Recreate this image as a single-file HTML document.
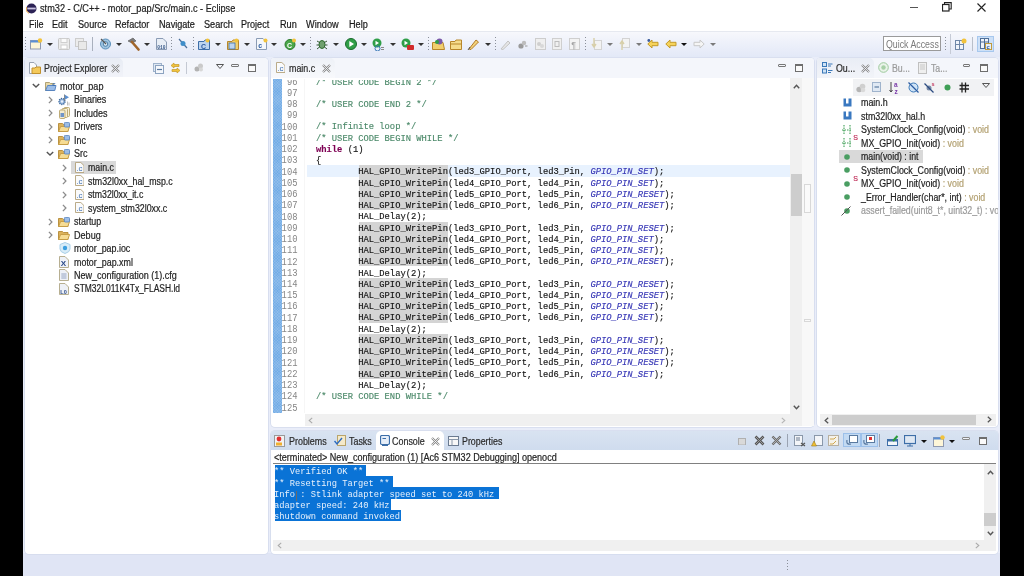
<!DOCTYPE html><html><head><meta charset="utf-8"><style>
*{margin:0;padding:0;box-sizing:border-box}
html,body{width:1024px;height:576px;overflow:hidden;background:#000}
body{position:relative;font-family:"Liberation Sans",sans-serif;font-size:9.5px;color:#1e1e1e}
.a{position:absolute}
.t{position:absolute;white-space:pre;line-height:11px;-webkit-text-stroke:0.2px currentColor}
.m{-webkit-text-stroke:0}
.m{font-family:"Liberation Mono",monospace}
#win{position:absolute;left:23px;top:0;width:977px;height:576px;background:#e1e6f6;overflow:hidden;filter:blur(0.35px)}
.dd{position:absolute;width:0;height:0;border-left:3px solid transparent;border-right:3px solid transparent;border-top:3px solid #222}
.grip{position:absolute;width:1px;height:13px;background:repeating-linear-gradient(#8a8f99 0 1px,transparent 1px 3px)}
.sep{position:absolute;width:1px;height:14px;background:#a9b0bd}
.ic{position:absolute}
.panel{position:absolute;background:#fff;overflow:hidden;border-radius:3px 3px 0 0}
.minb{position:absolute;width:8px;height:3px;border:1px solid #555;border-radius:1px}
.maxb{position:absolute;width:9px;height:9px;border:1px solid #555;border-top-width:2px}
.xcl{position:absolute;font-size:10px;color:#777;line-height:10px}
</style></head><body><div id="win">
<div class="a" style="left:0.00px;top:0.00px;width:977.00px;height:31.00px;background:#fff"></div>
<div class="a" style="left:0.00px;top:31.00px;width:977.00px;height:1.00px;background:#e6e9f0"></div>
<div class="a" style="left:0.00px;top:32.00px;width:977.00px;height:26.00px;background:linear-gradient(#f7f8fc,#eef1fa 40%,#e2e8f7)"></div>
<div class="a" style="left:0.00px;top:57.00px;width:977.00px;height:496.00px;background:#e9edf9"></div>
<div class="a" style="left:0.00px;top:553.00px;width:977.00px;height:23.00px;background:#e0e5f5"></div>
<svg class="ic" style="left:3.00px;top:3.00px;" width="11" height="11" viewBox="0 0 11 11"><circle cx="5.5" cy="5.5" r="5" fill="#2c2255"/><path d="M0.6 4.2 A5 5 0 0 0 3 10.3" stroke="#e9a640" stroke-width="1" fill="none"/><rect x="1.3" y="4.6" width="8.4" height="1.8" fill="#c9c3e0"/></svg>
<div class="t" style="left:17.00px;top:3.00px;font-size:10px;color:#222;transform:scaleX(0.9176);transform-origin:0 0;">stm32 - C/C++ - motor_pap/Src/main.c - Eclipse</div>
<div class="a" style="left:886.50px;top:7.00px;width:8.00px;height:1.00px;background:#555"></div>
<svg class="ic" style="left:919.00px;top:2.00px;" width="10" height="10" viewBox="0 0 10 10"><rect x="0.5" y="2.5" width="6.5" height="6.5" fill="none" stroke="#222" stroke-width="1.2"/><path d="M2.5 2.5 V0.6 H9.2 V7 H7" fill="none" stroke="#222" stroke-width="1.1"/></svg>
<svg class="ic" style="left:954.00px;top:2.50px;" width="9" height="9" viewBox="0 0 9 9"><path d="M0.5 0.5 L8.5 8.5 M8.5 0.5 L0.5 8.5" stroke="#222" stroke-width="1.1"/></svg>
<div class="t" style="left:5.50px;top:19.00px;font-size:10px;color:#1a1a1a;transform:scaleX(0.9004);transform-origin:0 0;">File</div>
<div class="t" style="left:29.00px;top:19.00px;font-size:10px;color:#1a1a1a;transform:scaleX(0.9036);transform-origin:0 0;">Edit</div>
<div class="t" style="left:54.50px;top:19.00px;font-size:10px;color:#1a1a1a;transform:scaleX(0.9121);transform-origin:0 0;">Source</div>
<div class="t" style="left:92.00px;top:19.00px;font-size:10px;color:#1a1a1a;transform:scaleX(0.9077);transform-origin:0 0;">Refactor</div>
<div class="t" style="left:135.50px;top:19.00px;font-size:10px;color:#1a1a1a;transform:scaleX(0.9095);transform-origin:0 0;">Navigate</div>
<div class="t" style="left:181.00px;top:19.00px;font-size:10px;color:#1a1a1a;transform:scaleX(0.9121);transform-origin:0 0;">Search</div>
<div class="t" style="left:218.00px;top:19.00px;font-size:10px;color:#1a1a1a;transform:scaleX(0.9050);transform-origin:0 0;">Project</div>
<div class="t" style="left:256.50px;top:19.00px;font-size:10px;color:#1a1a1a;transform:scaleX(0.9173);transform-origin:0 0;">Run</div>
<div class="t" style="left:282.50px;top:19.00px;font-size:10px;color:#1a1a1a;transform:scaleX(0.9163);transform-origin:0 0;">Window</div>
<div class="t" style="left:326.00px;top:19.00px;font-size:10px;color:#1a1a1a;transform:scaleX(0.9111);transform-origin:0 0;">Help</div>
<div class="grip" style="left:2.00px;top:37px"></div>
<svg class="ic" style="left:7.00px;top:38.00px;" width="13" height="12" viewBox="0 0 13 12"><rect x="0.5" y="2.5" width="10" height="8.5" fill="#fdf6d8" stroke="#8f9ab0"/><rect x="0.5" y="2.5" width="10" height="2" fill="#5b8fd6"/><circle cx="10" cy="2.5" r="2.2" fill="#f2c33c"/></svg>
<div class="dd" style="left:23.50px;top:43px;border-top-color:#333"></div>
<svg class="ic" style="left:34.50px;top:38.00px;" width="12" height="12" viewBox="0 0 12 12"><rect x="0.5" y="0.5" width="11" height="11" rx="1" fill="#ececec" stroke="#c4c4c4"/><rect x="3" y="0.5" width="6" height="4" fill="#fafafa" stroke="#cfcfcf"/><rect x="3" y="7" width="6" height="4" fill="#fff" stroke="#d0d0d0"/></svg>
<svg class="ic" style="left:52.00px;top:38.00px;" width="12" height="12" viewBox="0 0 12 12"><rect x="0.5" y="0.5" width="8" height="8" fill="#ececec" stroke="#cdcdcd"/><rect x="3.5" y="3.5" width="8" height="8" fill="#e9e9e9" stroke="#c4c4c4"/></svg>
<div class="sep" style="left:68.50px;top:37px"></div>
<svg class="ic" style="left:76.50px;top:38.00px;" width="11" height="12" viewBox="0 0 11 12"><circle cx="5.5" cy="6" r="5" fill="#9fc4e0" stroke="#5a8fba"/><circle cx="5.5" cy="6" r="2.3" fill="#dbe9f4" stroke="#4a7ea8"/><path d="M1 1 L6 6" stroke="#555" stroke-width="1.3"/></svg>
<div class="dd" style="left:92.50px;top:43px;border-top-color:#333"></div>
<svg class="ic" style="left:104.00px;top:37.00px;" width="13" height="14" viewBox="0 0 13 14"><path d="M1 4 L6 1 L9 4 L5 6 Z" fill="#7b7b7b" stroke="#555" stroke-width="0.6"/><path d="M5 5 L11.5 12.5" stroke="#a0652a" stroke-width="2.6" stroke-linecap="round"/></svg>
<div class="dd" style="left:121.00px;top:43px;border-top-color:#333"></div>
<svg class="ic" style="left:132.50px;top:38.00px;" width="11" height="12" viewBox="0 0 11 12"><path d="M0.5 0.5 H7 L10.5 4 V11.5 H0.5 Z" fill="#e8eef6" stroke="#8a9bb4"/><text x="1.3" y="10.5" font-size="4.6" font-family="Liberation Mono" fill="#3a5a8a" font-weight="bold">010</text></svg>
<div class="grip" style="left:148.00px;top:37px"></div>
<svg class="ic" style="left:154.50px;top:38.00px;" width="10" height="12" viewBox="0 0 10 12"><path d="M1 1 L9 10" stroke="#4a6f9a" stroke-width="1.2"/><circle cx="5" cy="5.5" r="2.5" fill="#3f8ec9"/></svg>
<div class="grip" style="left:169.50px;top:37px"></div>
<svg class="ic" style="left:175.00px;top:38.00px;" width="13" height="12" viewBox="0 0 13 12"><path d="M0.5 3.5 H6 L7 2 H11.5 V11.5 H0.5 Z" fill="#bcd4ee" stroke="#3d6ea8"/><text x="3" y="10.5" font-size="7" font-family="Liberation Sans" fill="#2a5aa0" font-weight="bold">C</text><circle cx="9.5" cy="2.5" r="2" fill="#f2c33c"/></svg>
<div class="dd" style="left:191.50px;top:43px;border-top-color:#333"></div>
<svg class="ic" style="left:204.00px;top:38.00px;" width="12" height="12" viewBox="0 0 12 12"><path d="M0.5 3.5 H5 L6 2 H11.5 V11.5 H0.5 Z" fill="#f1cf6e" stroke="#b8862a"/><rect x="2" y="5" width="6" height="6" fill="#bcd4ee" stroke="#3d6ea8" stroke-width="0.8"/><circle cx="9.5" cy="2.5" r="2" fill="#f2c33c"/></svg>
<div class="dd" style="left:220.50px;top:43px;border-top-color:#333"></div>
<svg class="ic" style="left:233.00px;top:38.00px;" width="12" height="12" viewBox="0 0 12 12"><path d="M0.5 0.5 H7 L10.5 4 V11.5 H0.5 Z" fill="#f4f7fb" stroke="#8a9bb4"/><text x="2.2" y="10" font-size="7" font-family="Liberation Sans" fill="#2a5aa0" font-weight="bold">c</text><circle cx="9.5" cy="2.5" r="2" fill="#f2c33c"/></svg>
<div class="dd" style="left:248.00px;top:43px;border-top-color:#333"></div>
<svg class="ic" style="left:260.50px;top:38.00px;" width="12" height="12" viewBox="0 0 12 12"><circle cx="6" cy="6.5" r="5" fill="#4aa64a" stroke="#2b7a2b"/><text x="3" y="9.5" font-size="7" font-family="Liberation Sans" fill="#fff" font-weight="bold">C</text><circle cx="10" cy="2.5" r="2" fill="#f2c33c"/></svg>
<div class="dd" style="left:277.00px;top:43px;border-top-color:#333"></div>
<div class="grip" style="left:286.50px;top:37px"></div>
<svg class="ic" style="left:293.00px;top:38.00px;" width="12" height="12" viewBox="0 0 12 12"><ellipse cx="6" cy="6.5" rx="3" ry="4" fill="#6fa06f" stroke="#2d6b2d"/><path d="M1 3 L3.5 4.5 M11 3 L8.5 4.5 M0.5 7 H3 M11.5 7 H9 M1 11 L3.5 9 M11 11 L8.5 9" stroke="#3a5a3a"/></svg>
<div class="dd" style="left:309.50px;top:43px;border-top-color:#333"></div>
<svg class="ic" style="left:321.50px;top:38.00px;" width="12" height="12" viewBox="0 0 12 12"><circle cx="6" cy="6" r="5.5" fill="#2f9e48" stroke="#1b6b2e"/><path d="M4.3 3 L9 6 L4.3 9 Z" fill="#fff"/></svg>
<div class="dd" style="left:337.50px;top:43px;border-top-color:#333"></div>
<svg class="ic" style="left:349.00px;top:38.00px;" width="13" height="13" viewBox="0 0 13 13"><circle cx="5" cy="5" r="4.5" fill="#2f9e48"/><path d="M3.5 2.8 L7 5 L3.5 7.2 Z" fill="#fff"/><rect x="3" y="8" width="5" height="5" rx="2.5" fill="none" stroke="#3a7ab8"/><path d="M9 9.5 H12 M9 11.5 H12" stroke="#888"/></svg>
<div class="dd" style="left:366.50px;top:43px;border-top-color:#333"></div>
<svg class="ic" style="left:378.00px;top:38.00px;" width="13" height="12" viewBox="0 0 13 12"><circle cx="5" cy="5" r="4.5" fill="#2f9e48"/><path d="M3.5 2.8 L7 5 L3.5 7.2 Z" fill="#fff"/><rect x="6" y="7" width="7" height="5" rx="1" fill="#d22c2c"/></svg>
<div class="dd" style="left:394.50px;top:43px;border-top-color:#333"></div>
<div class="grip" style="left:405.00px;top:37px"></div>
<svg class="ic" style="left:409.00px;top:38.00px;" width="13" height="12" viewBox="0 0 13 12"><path d="M0.5 4.5 H11 L12.5 11.5 H0.5 Z" fill="#f1cf6e" stroke="#b8862a"/><circle cx="7.5" cy="3.5" r="3" fill="#7a5aa8"/><circle cx="5" cy="4" r="2" fill="#2f9e48"/></svg>
<svg class="ic" style="left:426.50px;top:38.00px;" width="12" height="12" viewBox="0 0 12 12"><path d="M0.5 3.5 H5 L6 2 H11.5 V11.5 H0.5 Z" fill="#f6dc8c" stroke="#b8862a"/><path d="M0.5 6 H11.5" stroke="#b8862a"/></svg>
<svg class="ic" style="left:444.00px;top:38.00px;" width="13" height="12" viewBox="0 0 13 12"><path d="M2 11 L9 2 L11.5 4 L4 11.5 Z" fill="#f3d27a" stroke="#b07a28"/><path d="M1 12 L3 9" stroke="#555"/></svg>
<div class="dd" style="left:461.50px;top:43px;border-top-color:#333"></div>
<div class="grip" style="left:471.50px;top:37px"></div>
<svg class="ic" style="left:476.50px;top:38.00px;" width="12" height="12" viewBox="0 0 12 12"><path d="M1 11 L8 3 L10 5 L3 11.5 Z" fill="#e6e6e6" stroke="#c3c3c3"/></svg>
<svg class="ic" style="left:495.00px;top:40.00px;" width="10" height="9" viewBox="0 0 10 9"><circle cx="3" cy="6" r="2.6" fill="#9a9a9a"/><circle cx="6" cy="3" r="2.2" fill="#bdbdbd"/><path d="M7 6 L9.5 6" stroke="#999"/></svg>
<svg class="ic" style="left:511.50px;top:38.00px;" width="11" height="12" viewBox="0 0 11 12"><rect x="0.5" y="0.5" width="10" height="11" fill="#efefef" stroke="#cdcdcd"/><circle cx="4" cy="6" r="2" fill="#cfcfcf"/><circle cx="7" cy="8" r="2" fill="#d8d8d8"/></svg>
<svg class="ic" style="left:529.00px;top:38.00px;" width="10" height="12" viewBox="0 0 10 12"><rect x="0.5" y="0.5" width="9" height="11" fill="#f0f0f0" stroke="#cfcfcf"/><rect x="3" y="3.5" width="4" height="5" fill="none" stroke="#bdbdbd"/></svg>
<svg class="ic" style="left:546.00px;top:38.00px;" width="11" height="12" viewBox="0 0 11 12"><rect x="0.5" y="0.5" width="10" height="11" fill="#f3f3f3" stroke="#cfcfcf"/><text x="2.3" y="10" font-size="9" font-family="Liberation Sans" fill="#a3a3a3">&#182;</text></svg>
<div class="grip" style="left:562.00px;top:37px"></div>
<svg class="ic" style="left:567.50px;top:38.00px;" width="11" height="12" viewBox="0 0 11 12"><rect x="3.5" y="2.5" width="7" height="9" fill="#f3f3f3" stroke="#d3d3d3"/><path d="M3 0 V8 M1 6 L3 9 L5 6" stroke="#d8cfa8" stroke-width="1.4" fill="none"/></svg>
<div class="dd" style="left:583.50px;top:43px;border-top-color:#7a7a7a"></div>
<svg class="ic" style="left:596.00px;top:38.00px;" width="11" height="12" viewBox="0 0 11 12"><rect x="3.5" y="0.5" width="7" height="9" fill="#f3f3f3" stroke="#d3d3d3"/><path d="M3 12 V4 M1 6 L3 3 L5 6" stroke="#d8cfa8" stroke-width="1.4" fill="none"/></svg>
<div class="dd" style="left:612.50px;top:43px;border-top-color:#7a7a7a"></div>
<svg class="ic" style="left:623.50px;top:39.00px;" width="12" height="10" viewBox="0 0 12 10"><path d="M0.8 5 L5 1 V3.3 H11 V6.7 H5 V9 Z" fill="#f6d35a" stroke="#c39a2a"/><circle cx="1.8" cy="1.5" r="1.4" fill="#3a5a9a"/></svg>
<svg class="ic" style="left:641.50px;top:39.00px;" width="12" height="10" viewBox="0 0 12 10"><path d="M0.8 5 L5 1 V3.3 H11 V6.7 H5 V9 Z" fill="#f6d35a" stroke="#c39a2a"/></svg>
<div class="dd" style="left:658.00px;top:43px;border-top-color:#111"></div>
<svg class="ic" style="left:670.00px;top:39.00px;" width="12" height="10" viewBox="0 0 12 10"><path d="M11.2 5 L7 1 V3.3 H1 V6.7 H7 V9 Z" fill="#f5f5f5" stroke="#c8c8c8"/></svg>
<div class="dd" style="left:686.50px;top:43px;border-top-color:#7a7a7a"></div>
<div class="a" style="left:860.00px;top:35.50px;width:57.50px;height:15.50px;background:#fff;border:1px solid #9a9a9a"></div>
<div class="t" style="left:862.50px;top:38.50px;font-size:10px;color:#7a7a7a;transform:scaleX(0.8800);transform-origin:0 0;-webkit-text-stroke:0">Quick Access</div>
<div class="grip" style="left:922.00px;top:37px"></div>
<div class="a" style="left:927.00px;top:34.00px;width:1.00px;height:20.00px;background:#c6cbd6"></div>
<svg class="ic" style="left:932.00px;top:38.00px;" width="12" height="12" viewBox="0 0 12 12"><rect x="0.5" y="2.5" width="8" height="9" fill="#f0f4fa" stroke="#6f87a8"/><path d="M0.5 6.5 H8.5 M4.5 2.5 V11.5" stroke="#6f87a8"/><circle cx="9" cy="3" r="2.5" fill="#f2c33c"/></svg>
<div class="a" style="left:949.00px;top:37.00px;width:1.00px;height:14.00px;background:#b9bfca"></div>
<div class="a" style="left:954.00px;top:36.00px;width:17.00px;height:16.00px;background:#cde0f7;border:1px solid #a7c8ee"></div>
<svg class="ic" style="left:956.50px;top:38.00px;" width="12" height="12" viewBox="0 0 12 12"><rect x="0.5" y="0.5" width="8" height="10" fill="#f0f4fa" stroke="#4f6f98"/><path d="M0.5 4 H8.5 M4.5 0.5 V10.5" stroke="#4f6f98"/><rect x="5.5" y="5.5" width="6" height="6" fill="#e6eef8" stroke="#c09a3a"/><text x="6.5" y="11" font-size="6" font-family="Liberation Sans" fill="#2a5aa0" font-weight="bold">c</text></svg>
<div class="a" style="left:2.40px;top:57.80px;width:242.30px;height:496.00px;background:#fff;border-radius:4px;box-shadow:0 0 0 0.8px #d3daec"></div>
<div class="a" style="left:2.40px;top:57.80px;width:242.30px;height:19.70px;background:#f4f6fb;border-radius:4px 4px 0 0"></div>
<div class="a" style="left:2.40px;top:57.80px;width:97.60px;height:19.70px;background:linear-gradient(#e8ecf4,#f1f3f9);border-radius:3px 5px 0 0"></div>
<svg class="ic" style="left:6.00px;top:62.00px;" width="12" height="12" viewBox="0 0 12 12"><path d="M0.5 0.5 H5 L7.5 3 V11.5 H0.5 Z" fill="#fbfbfb" stroke="#9aa3b1"/><path d="M3 6 H6 L7 5 H11.5 V11.5 H3 Z" fill="#f4c95a" stroke="#c1912e"/></svg>
<div class="t" style="left:20.50px;top:62.50px;font-size:10px;color:#2a2a2a;transform:scaleX(0.8870);transform-origin:0 0;">Project Explorer</div>
<svg class="ic" style="left:88.00px;top:63.50px;" width="9" height="9" viewBox="0 0 9 9"><path d="M1 1 L8 8 M8 1 L1 8" stroke="#8a8a8a" stroke-width="2.2"/><path d="M1 1 L8 8 M8 1 L1 8" stroke="#f4f6fb" stroke-width="0.8"/></svg>
<svg class="ic" style="left:130.00px;top:62.50px;" width="11" height="11" viewBox="0 0 11 11"><rect x="0.5" y="0.5" width="8" height="8" fill="#dfe8f3" stroke="#9fb3cc"/><rect x="2.5" y="2.5" width="8" height="8" fill="#f5f8fc" stroke="#8ca3c0"/><path d="M4 6.5 H9" stroke="#5a7aa0" stroke-width="1.2"/></svg>
<svg class="ic" style="left:147.00px;top:62.00px;" width="11" height="12" viewBox="0 0 11 12"><path d="M1 3.5 L4 1 V2.5 H9 V4.5 H4 V6 Z" fill="#f2c33c" stroke="#c39a2a" stroke-width="0.7"/><path d="M10 8.5 L7 6 V7.5 H2 V9.5 H7 V11 Z" fill="#f2c33c" stroke="#c39a2a" stroke-width="0.7"/></svg>
<div class="a" style="left:163.00px;top:62.00px;width:1.00px;height:12.00px;background:#c4c9d3"></div>
<svg class="ic" style="left:170.50px;top:63.00px;" width="10" height="9" viewBox="0 0 10 9"><circle cx="3" cy="6" r="2.5" fill="#b3b3b3"/><circle cx="6.5" cy="3" r="2.5" fill="#cacaca"/><circle cx="7" cy="6.5" r="2" fill="#d7d7d7"/></svg>
<svg class="ic" style="left:193.00px;top:64.00px;" width="8" height="5" viewBox="0 0 8 5"><path d="M0.5 0.5 H7.5 L4 4.5 Z" fill="none" stroke="#555"/></svg>
<div class="a" style="left:208.40px;top:64.10px;width:7.30px;height:3.00px;border:1px solid #777;border-radius:1px;background:#f4f6fb"></div>
<div class="a" style="left:225.40px;top:64.00px;width:7.80px;height:7.50px;border:1px solid #6e6e6e;border-top-width:2px;background:#fafafa"></div>
<svg class="ic" style="left:9.00px;top:83.00px;" width="8" height="5" viewBox="0 0 8 5"><path d="M0.8 0.9 L4 4 L7.2 0.9" fill="none" stroke="#555" stroke-width="1.4"/></svg>
<svg class="ic" style="left:21.50px;top:80.50px;" width="12" height="10" viewBox="0 0 12 10"><path d="M0.5 1.5 H4.5 L5.5 2.5 H9 V9.5 H0.5 Z" fill="#e9d9a8" stroke="#a89a6a" stroke-width="0.9"/><path d="M0.6 9.5 L2.6 4.5 H11 L9.8 9.5 Z" fill="#9cbde8" stroke="#4f7fc0" stroke-width="0.9"/><text x="7.3" y="5" font-size="6" font-family="Liberation Sans" font-weight="bold" fill="#3a6fb8">c</text></svg>
<div class="t" style="left:37.00px;top:80.60px;font-size:10px;color:#1e1e1e;transform:scaleX(0.9086);transform-origin:0 0;">motor_pap</div>
<svg class="ic" style="left:24.50px;top:95.50px;" width="5" height="8" viewBox="0 0 5 8"><path d="M0.9 0.9 L3.9 4 L0.9 7.1" fill="none" stroke="#8c8c8c" stroke-width="1.3"/></svg>
<svg class="ic" style="left:35.00px;top:93.50px;" width="12" height="12" viewBox="0 0 12 12"><circle cx="4" cy="7.5" r="3" fill="#8fb0d8" stroke="#3f6a9e" stroke-width="1.3" stroke-dasharray="1.2 0.9"/><circle cx="4" cy="7.5" r="1.2" fill="#e8f0fa"/><path d="M6.5 0.5 V6 L11 3.2 Z" fill="#5b8fd0"/><path d="M6.5 0.5 V7" stroke="#777" stroke-width="0.8"/><path d="M9.5 7.5 V11.5 M11 8.5 V11.5" stroke="#b8b8b8" stroke-width="0.9"/></svg>
<div class="t" style="left:51.00px;top:94.10px;font-size:10px;color:#1e1e1e;transform:scaleX(0.8946);transform-origin:0 0;">Binaries</div>
<svg class="ic" style="left:24.50px;top:109.00px;" width="5" height="8" viewBox="0 0 5 8"><path d="M0.9 0.9 L3.9 4 L0.9 7.1" fill="none" stroke="#8c8c8c" stroke-width="1.3"/></svg>
<svg class="ic" style="left:35.50px;top:107.00px;" width="12" height="12" viewBox="0 0 12 12"><rect x="5" y="0.5" width="5.5" height="9" rx="1" fill="#f7f0d8" stroke="#b8a46a" stroke-width="0.9"/><rect x="3" y="1.5" width="5.5" height="9" rx="1" fill="#f7f0d8" stroke="#b8a46a" stroke-width="0.9"/><rect x="0.5" y="3" width="5.5" height="8.5" rx="1" fill="#f4ecd0" stroke="#b8a46a" stroke-width="0.9"/><rect x="1.5" y="6" width="3.5" height="4" fill="#6f94c8"/></svg>
<div class="t" style="left:51.00px;top:107.60px;font-size:10px;color:#1e1e1e;transform:scaleX(0.8963);transform-origin:0 0;">Includes</div>
<svg class="ic" style="left:24.50px;top:122.50px;" width="5" height="8" viewBox="0 0 5 8"><path d="M0.9 0.9 L3.9 4 L0.9 7.1" fill="none" stroke="#8c8c8c" stroke-width="1.3"/></svg>
<svg class="ic" style="left:35.00px;top:121.50px;" width="12" height="10" viewBox="0 0 12 10"><path d="M0.5 1.5 H4.5 L5.5 2.5 H10 V9.5 H0.5 Z" fill="#dcb25a" stroke="#b48a36" stroke-width="0.9"/><path d="M0.6 9.5 L2.6 4.5 H11.6 L9.8 9.5 Z" fill="#f6dc94" stroke="#c49a42" stroke-width="0.9"/><rect x="6.3" y="0.4" width="5.2" height="4.6" rx="1" fill="#9dbde6" stroke="#5a86c0" stroke-width="0.9"/></svg>
<div class="t" style="left:51.00px;top:121.10px;font-size:10px;color:#1e1e1e;transform:scaleX(0.8947);transform-origin:0 0;">Drivers</div>
<svg class="ic" style="left:24.50px;top:136.00px;" width="5" height="8" viewBox="0 0 5 8"><path d="M0.9 0.9 L3.9 4 L0.9 7.1" fill="none" stroke="#8c8c8c" stroke-width="1.3"/></svg>
<svg class="ic" style="left:35.00px;top:135.00px;" width="12" height="10" viewBox="0 0 12 10"><path d="M0.5 1.5 H4.5 L5.5 2.5 H10 V9.5 H0.5 Z" fill="#dcb25a" stroke="#b48a36" stroke-width="0.9"/><path d="M0.6 9.5 L2.6 4.5 H11.6 L9.8 9.5 Z" fill="#f6dc94" stroke="#c49a42" stroke-width="0.9"/><rect x="6.3" y="0.4" width="5.2" height="4.6" rx="1" fill="#9dbde6" stroke="#5a86c0" stroke-width="0.9"/></svg>
<div class="t" style="left:51.00px;top:134.60px;font-size:10px;color:#1e1e1e;transform:scaleX(0.8938);transform-origin:0 0;">Inc</div>
<svg class="ic" style="left:23.00px;top:150.50px;" width="8" height="5" viewBox="0 0 8 5"><path d="M0.8 0.9 L4 4 L7.2 0.9" fill="none" stroke="#555" stroke-width="1.4"/></svg>
<svg class="ic" style="left:35.00px;top:148.50px;" width="12" height="10" viewBox="0 0 12 10"><path d="M0.5 1.5 H4.5 L5.5 2.5 H10 V9.5 H0.5 Z" fill="#dcb25a" stroke="#b48a36" stroke-width="0.9"/><path d="M0.6 9.5 L2.6 4.5 H11.6 L9.8 9.5 Z" fill="#f6dc94" stroke="#c49a42" stroke-width="0.9"/><rect x="6.3" y="0.4" width="5.2" height="4.6" rx="1" fill="#9dbde6" stroke="#5a86c0" stroke-width="0.9"/></svg>
<div class="t" style="left:51.00px;top:148.10px;font-size:10px;color:#1e1e1e;transform:scaleX(0.9000);transform-origin:0 0;">Src</div>
<div class="a" style="left:47.75px;top:160.50px;width:45.50px;height:13.50px;background:#d9d9d9"></div>
<svg class="ic" style="left:39.00px;top:163.50px;" width="5" height="8" viewBox="0 0 5 8"><path d="M0.9 0.9 L3.9 4 L0.9 7.1" fill="none" stroke="#8c8c8c" stroke-width="1.3"/></svg>
<svg class="ic" style="left:51.50px;top:161.70px;" width="9.5" height="11" viewBox="0 0 9.5 11"><path d="M0.5 0.5 H5.8 L9 3.6 V10.5 H0.5 Z" fill="#fafbfc" stroke="#b3a27a" stroke-width="0.9"/><text x="1.2" y="8.8" font-size="8" font-family="Liberation Sans" fill="#3f6fb0">.c</text></svg>
<div class="t" style="left:65.00px;top:162.10px;font-size:10px;color:#1e1e1e;transform:scaleX(0.8787);transform-origin:0 0;">main.c</div>
<svg class="ic" style="left:39.00px;top:177.00px;" width="5" height="8" viewBox="0 0 5 8"><path d="M0.9 0.9 L3.9 4 L0.9 7.1" fill="none" stroke="#8c8c8c" stroke-width="1.3"/></svg>
<svg class="ic" style="left:51.50px;top:175.20px;" width="9.5" height="11" viewBox="0 0 9.5 11"><path d="M0.5 0.5 H5.8 L9 3.6 V10.5 H0.5 Z" fill="#fafbfc" stroke="#b3a27a" stroke-width="0.9"/><text x="1.2" y="8.8" font-size="8" font-family="Liberation Sans" fill="#3f6fb0">.c</text></svg>
<div class="t" style="left:65.00px;top:175.60px;font-size:10px;color:#1e1e1e;transform:scaleX(0.8808);transform-origin:0 0;">stm32l0xx_hal_msp.c</div>
<svg class="ic" style="left:39.00px;top:190.50px;" width="5" height="8" viewBox="0 0 5 8"><path d="M0.9 0.9 L3.9 4 L0.9 7.1" fill="none" stroke="#8c8c8c" stroke-width="1.3"/></svg>
<svg class="ic" style="left:51.50px;top:188.70px;" width="9.5" height="11" viewBox="0 0 9.5 11"><path d="M0.5 0.5 H5.8 L9 3.6 V10.5 H0.5 Z" fill="#fafbfc" stroke="#b3a27a" stroke-width="0.9"/><text x="1.2" y="8.8" font-size="8" font-family="Liberation Sans" fill="#3f6fb0">.c</text></svg>
<div class="t" style="left:65.00px;top:189.10px;font-size:10px;color:#1e1e1e;transform:scaleX(0.8727);transform-origin:0 0;">stm32l0xx_it.c</div>
<svg class="ic" style="left:39.00px;top:204.00px;" width="5" height="8" viewBox="0 0 5 8"><path d="M0.9 0.9 L3.9 4 L0.9 7.1" fill="none" stroke="#8c8c8c" stroke-width="1.3"/></svg>
<svg class="ic" style="left:51.50px;top:202.20px;" width="9.5" height="11" viewBox="0 0 9.5 11"><path d="M0.5 0.5 H5.8 L9 3.6 V10.5 H0.5 Z" fill="#fafbfc" stroke="#b3a27a" stroke-width="0.9"/><text x="1.2" y="8.8" font-size="8" font-family="Liberation Sans" fill="#3f6fb0">.c</text></svg>
<div class="t" style="left:65.00px;top:202.60px;font-size:10px;color:#1e1e1e;transform:scaleX(0.8800);transform-origin:0 0;">system_stm32l0xx.c</div>
<svg class="ic" style="left:24.50px;top:217.50px;" width="5" height="8" viewBox="0 0 5 8"><path d="M0.9 0.9 L3.9 4 L0.9 7.1" fill="none" stroke="#8c8c8c" stroke-width="1.3"/></svg>
<svg class="ic" style="left:35.00px;top:216.50px;" width="12" height="10" viewBox="0 0 12 10"><path d="M0.5 1.5 H4.5 L5.5 2.5 H10 V9.5 H0.5 Z" fill="#dcb25a" stroke="#b48a36" stroke-width="0.9"/><path d="M0.6 9.5 L2.6 4.5 H11.6 L9.8 9.5 Z" fill="#f6dc94" stroke="#c49a42" stroke-width="0.9"/><rect x="6.3" y="0.4" width="5.2" height="4.6" rx="1" fill="#9dbde6" stroke="#5a86c0" stroke-width="0.9"/></svg>
<div class="t" style="left:51.00px;top:216.10px;font-size:10px;color:#1e1e1e;transform:scaleX(0.8928);transform-origin:0 0;">startup</div>
<svg class="ic" style="left:24.50px;top:231.00px;" width="5" height="8" viewBox="0 0 5 8"><path d="M0.9 0.9 L3.9 4 L0.9 7.1" fill="none" stroke="#8c8c8c" stroke-width="1.3"/></svg>
<svg class="ic" style="left:35.00px;top:230.00px;" width="12" height="10" viewBox="0 0 12 10"><path d="M0.5 1.5 H4.5 L5.5 2.5 H10 V9.5 H0.5 Z" fill="#dcb25a" stroke="#b48a36" stroke-width="0.9"/><path d="M0.6 9.5 L2.6 4.5 H11.6 L9.8 9.5 Z" fill="#f6dc94" stroke="#c49a42" stroke-width="0.9"/></svg>
<div class="t" style="left:51.00px;top:229.60px;font-size:10px;color:#1e1e1e;transform:scaleX(0.9076);transform-origin:0 0;">Debug</div>
<svg class="ic" style="left:35.50px;top:242.00px;" width="12" height="12" viewBox="0 0 12 12"><path d="M6 0.5 L11 2.5 V7 Q11 10 6 11.5 Q1 10 1 7 V2.5 Z" fill="#d8ecf8" stroke="#a9cfe8"/><circle cx="6" cy="6" r="2.2" fill="#3d9fe0"/></svg>
<div class="t" style="left:51.00px;top:243.10px;font-size:10px;color:#1e1e1e;transform:scaleX(0.8885);transform-origin:0 0;">motor_pap.ioc</div>
<svg class="ic" style="left:36.00px;top:255.50px;" width="10" height="12" viewBox="0 0 10 12"><path d="M0.5 0.5 H6 L9.5 4 V11.5 H0.5 Z" fill="#eef1f7" stroke="#b0a684" stroke-width="0.9"/><text x="1.8" y="10" font-size="8" font-family="Liberation Sans" font-weight="bold" fill="#2a4a88">X</text></svg>
<div class="t" style="left:51.00px;top:256.60px;font-size:10px;color:#1e1e1e;transform:scaleX(0.8910);transform-origin:0 0;">motor_pap.xml</div>
<svg class="ic" style="left:36.00px;top:269.00px;" width="10" height="12" viewBox="0 0 10 12"><path d="M0.5 0.5 H6 L9.5 4 V11.5 H0.5 Z" fill="#eef1f7" stroke="#b0a684" stroke-width="0.9"/><path d="M2.3 5 H7.5 M2.3 7 H7.5 M2.3 9 H7.5" stroke="#8a9cbc" stroke-width="0.9"/></svg>
<div class="t" style="left:51.00px;top:270.10px;font-size:10px;color:#1e1e1e;transform:scaleX(0.9017);transform-origin:0 0;">New_configuration (1).cfg</div>
<svg class="ic" style="left:36.00px;top:282.50px;" width="10" height="12" viewBox="0 0 10 12"><path d="M0.5 0.5 H6 L9.5 4 V11.5 H0.5 Z" fill="#eef1f7" stroke="#b0a684" stroke-width="0.9"/><text x="1.3" y="10.5" font-size="5.5" font-family="Liberation Sans" font-weight="bold" fill="#2a4a88">L0</text></svg>
<div class="t" style="left:51.00px;top:283.10px;font-size:10px;color:#1e1e1e;transform:scaleX(0.8448);transform-origin:0 0;">STM32L011K4Tx_FLASH.ld</div>
<div class="a" style="left:247.80px;top:57.50px;width:543.60px;height:369.00px;background:#fff;border-radius:4px;box-shadow:0 0 0 0.8px #d3daec"></div>
<div class="a" style="left:247.80px;top:57.50px;width:543.60px;height:20.00px;background:#f4f6fb;border-radius:3px 3px 0 0"></div>
<div class="a" style="left:247.80px;top:57.50px;width:64.00px;height:20.00px;background:linear-gradient(#eef1f7,#f8f9fc);border-radius:3px 5px 0 0"></div>
<svg class="ic" style="left:252.50px;top:62.20px;" width="9.5" height="11" viewBox="0 0 9.5 11"><path d="M0.5 0.5 H5.8 L9 3.6 V10.5 H0.5 Z" fill="#fafbfc" stroke="#b3a27a" stroke-width="0.9"/><text x="1.2" y="8.8" font-size="8" font-family="Liberation Sans" fill="#3f6fb0">.c</text></svg>
<div class="t" style="left:266.00px;top:62.50px;font-size:10px;color:#2a2a2a;transform:scaleX(0.8889);transform-origin:0 0;">main.c</div>
<svg class="ic" style="left:298.50px;top:63.50px;" width="9" height="9" viewBox="0 0 9 9"><path d="M1 1 L8 8 M8 1 L1 8" stroke="#8a8a8a" stroke-width="2.2"/><path d="M1 1 L8 8 M8 1 L1 8" stroke="#f6f7fb" stroke-width="0.8"/></svg>
<div class="a" style="left:755.00px;top:64.00px;width:7.60px;height:3.00px;border:1px solid #777;border-radius:1px"></div>
<div class="a" style="left:772.00px;top:64.00px;width:8.00px;height:7.60px;border:1px solid #6e6e6e;border-top-width:2px;background:#fafafa"></div>
<div class="a" style="left:250.00px;top:79.00px;width:9.00px;height:333.50px;background:#74ade6;background-image:repeating-linear-gradient(45deg,rgba(255,255,255,.10) 0 1px,transparent 1px 2px),repeating-linear-gradient(-45deg,rgba(255,255,255,.10) 0 1px,transparent 1px 2px)"></div>
<div class="a" style="left:767.00px;top:78.00px;width:12.00px;height:347.50px;background:#f0f0f0"></div>
<div class="a" style="left:779.00px;top:78.00px;width:12.00px;height:347.50px;background:#f8f8f8"></div>
<div class="a" style="left:781.00px;top:318.50px;width:6.50px;height:3.50px;background:#fafafa;border:1px solid #d8d8d8"></div>
<div class="a" style="left:767.50px;top:174.00px;width:11.50px;height:41.50px;background:#cdcdcd"></div>
<div class="a" style="left:781.00px;top:184.00px;width:6.50px;height:28.50px;background:#fafafa;border:1px solid #d8d8d8"></div>
<svg class="ic" style="left:770.00px;top:83.50px;" width="7" height="5" viewBox="0 0 7 5"><path d="M0.8 4.2 L3.5 1.2 L6.2 4.2" fill="none" stroke="#555" stroke-width="1.4"/></svg>
<svg class="ic" style="left:770.00px;top:404.50px;" width="7" height="5" viewBox="0 0 7 5"><path d="M0.8 0.8 L3.5 3.8 L6.2 0.8" fill="none" stroke="#555" stroke-width="1.4"/></svg>
<div class="a" style="left:282.00px;top:414.00px;width:485.00px;height:11.50px;background:#f0f0f0"></div>
<svg class="ic" style="left:758.00px;top:416.50px;" width="5" height="7" viewBox="0 0 5 7"><path d="M0.8 0.8 L3.8 3.5 L0.8 6.2" fill="none" stroke="#b5b5b5" stroke-width="1.1"/></svg>
<svg class="ic" style="left:285.30px;top:416.50px;" width="5" height="7" viewBox="0 0 5 7"><path d="M4.2 0.8 L1.2 3.5 L4.2 6.2" fill="none" stroke="#aaa" stroke-width="1.1"/></svg>
<div class="a" style="left:284.00px;top:165.30px;width:483.00px;height:11.24px;background:#e8f2fe"></div>
<div class="a" style="left:336.00px;top:165.30px;width:89.00px;height:44.98px;background:#d4d4d4"></div>
<div class="a" style="left:336.00px;top:221.53px;width:89.00px;height:44.98px;background:#d4d4d4"></div>
<div class="a" style="left:336.00px;top:277.75px;width:89.00px;height:44.98px;background:#d4d4d4"></div>
<div class="a" style="left:336.00px;top:333.98px;width:89.00px;height:44.98px;background:#d4d4d4"></div>
<div class="a" style="left:247.8px;top:80.3px;width:519px;height:334px;overflow:hidden"><div class="a m" style="left:45.19999999999999px;top:-3.760px;font-size:9.9px;letter-spacing:0px;line-height:11.245px;white-space:pre;-webkit-text-stroke:0.15px currentColor;transform:scaleX(0.8904);transform-origin:0 0"><div style="height:11.245px"><span style="color:#4a8868">/* USER CODE BEGIN 2 */</span></div><div style="height:11.245px"></div><div style="height:11.245px"><span style="color:#4a8868">/* USER CODE END 2 */</span></div><div style="height:11.245px"></div><div style="height:11.245px"><span style="color:#4a8868">/* Infinite loop */</span></div><div style="height:11.245px"><span style="color:#4a8868">/* USER CODE BEGIN WHILE */</span></div><div style="height:11.245px"><span style="color:#7f0055;font-weight:bold">while</span><span style="color:#111"> (1)</span></div><div style="height:11.245px"><span style="color:#111">{</span></div><div style="height:11.245px"><span style="color:#111">        HAL_GPIO_WritePin(led3_GPIO_Port, led3_Pin, </span><span style="color:#3535b5;font-style:italic">GPIO_PIN_SET</span><span style="color:#111">);</span></div><div style="height:11.245px"><span style="color:#111">        HAL_GPIO_WritePin(led4_GPIO_Port, led4_Pin, </span><span style="color:#3535b5;font-style:italic">GPIO_PIN_SET</span><span style="color:#111">);</span></div><div style="height:11.245px"><span style="color:#111">        HAL_GPIO_WritePin(led5_GPIO_Port, led5_Pin, </span><span style="color:#3535b5;font-style:italic">GPIO_PIN_RESET</span><span style="color:#111">);</span></div><div style="height:11.245px"><span style="color:#111">        HAL_GPIO_WritePin(led6_GPIO_Port, led6_Pin, </span><span style="color:#3535b5;font-style:italic">GPIO_PIN_RESET</span><span style="color:#111">);</span></div><div style="height:11.245px"><span style="color:#111">        HAL_Delay(2);</span></div><div style="height:11.245px"><span style="color:#111">        HAL_GPIO_WritePin(led3_GPIO_Port, led3_Pin, </span><span style="color:#3535b5;font-style:italic">GPIO_PIN_RESET</span><span style="color:#111">);</span></div><div style="height:11.245px"><span style="color:#111">        HAL_GPIO_WritePin(led4_GPIO_Port, led4_Pin, </span><span style="color:#3535b5;font-style:italic">GPIO_PIN_SET</span><span style="color:#111">);</span></div><div style="height:11.245px"><span style="color:#111">        HAL_GPIO_WritePin(led5_GPIO_Port, led5_Pin, </span><span style="color:#3535b5;font-style:italic">GPIO_PIN_SET</span><span style="color:#111">);</span></div><div style="height:11.245px"><span style="color:#111">        HAL_GPIO_WritePin(led6_GPIO_Port, led6_Pin, </span><span style="color:#3535b5;font-style:italic">GPIO_PIN_RESET</span><span style="color:#111">);</span></div><div style="height:11.245px"><span style="color:#111">        HAL_Delay(2);</span></div><div style="height:11.245px"><span style="color:#111">        HAL_GPIO_WritePin(led3_GPIO_Port, led3_Pin, </span><span style="color:#3535b5;font-style:italic">GPIO_PIN_RESET</span><span style="color:#111">);</span></div><div style="height:11.245px"><span style="color:#111">        HAL_GPIO_WritePin(led4_GPIO_Port, led4_Pin, </span><span style="color:#3535b5;font-style:italic">GPIO_PIN_RESET</span><span style="color:#111">);</span></div><div style="height:11.245px"><span style="color:#111">        HAL_GPIO_WritePin(led5_GPIO_Port, led5_Pin, </span><span style="color:#3535b5;font-style:italic">GPIO_PIN_SET</span><span style="color:#111">);</span></div><div style="height:11.245px"><span style="color:#111">        HAL_GPIO_WritePin(led6_GPIO_Port, led6_Pin, </span><span style="color:#3535b5;font-style:italic">GPIO_PIN_SET</span><span style="color:#111">);</span></div><div style="height:11.245px"><span style="color:#111">        HAL_Delay(2);</span></div><div style="height:11.245px"><span style="color:#111">        HAL_GPIO_WritePin(led3_GPIO_Port, led3_Pin, </span><span style="color:#3535b5;font-style:italic">GPIO_PIN_SET</span><span style="color:#111">);</span></div><div style="height:11.245px"><span style="color:#111">        HAL_GPIO_WritePin(led4_GPIO_Port, led4_Pin, </span><span style="color:#3535b5;font-style:italic">GPIO_PIN_RESET</span><span style="color:#111">);</span></div><div style="height:11.245px"><span style="color:#111">        HAL_GPIO_WritePin(led5_GPIO_Port, led5_Pin, </span><span style="color:#3535b5;font-style:italic">GPIO_PIN_RESET</span><span style="color:#111">);</span></div><div style="height:11.245px"><span style="color:#111">        HAL_GPIO_WritePin(led6_GPIO_Port, led6_Pin, </span><span style="color:#3535b5;font-style:italic">GPIO_PIN_SET</span><span style="color:#111">);</span></div><div style="height:11.245px"><span style="color:#111">        HAL_Delay(2);</span></div><div style="height:11.245px"><span style="color:#4a8868">/* USER CODE END WHILE */</span></div><div style="height:11.245px"></div></div></div>
<div class="a" style="left:281.40px;top:79.00px;width:0.60px;height:334.00px;background:#f6f6f6"></div>
<div class="a" style="left:247.8px;top:80.3px;width:36px;height:334px;overflow:hidden"><div class="a m" style="left:0;width:31.56px;text-align:right;top:-3.560px;font-size:10.5px;letter-spacing:0px;line-height:11.245px;color:#868686;transform:scaleX(0.8395);transform-origin:0 0"><div style="height:11.245px">96</div><div style="height:11.245px">97</div><div style="height:11.245px">98</div><div style="height:11.245px">99</div><div style="height:11.245px">100</div><div style="height:11.245px">101</div><div style="height:11.245px">102</div><div style="height:11.245px">103</div><div style="height:11.245px">104</div><div style="height:11.245px">105</div><div style="height:11.245px">106</div><div style="height:11.245px">107</div><div style="height:11.245px">108</div><div style="height:11.245px">109</div><div style="height:11.245px">110</div><div style="height:11.245px">111</div><div style="height:11.245px">112</div><div style="height:11.245px">113</div><div style="height:11.245px">114</div><div style="height:11.245px">115</div><div style="height:11.245px">116</div><div style="height:11.245px">117</div><div style="height:11.245px">118</div><div style="height:11.245px">119</div><div style="height:11.245px">120</div><div style="height:11.245px">121</div><div style="height:11.245px">122</div><div style="height:11.245px">123</div><div style="height:11.245px">124</div><div style="height:11.245px">125</div></div></div>
<div class="a" style="left:794.20px;top:57.50px;width:180.50px;height:369.00px;background:#fff;border-radius:4px;box-shadow:0 0 0 0.8px #d3daec"></div>
<div class="a" style="left:794.20px;top:57.50px;width:180.50px;height:20.00px;background:#f4f6fb;border-radius:3px 3px 0 0"></div>
<div class="a" style="left:794.20px;top:57.50px;width:57.00px;height:20.00px;background:linear-gradient(#e9edf5,#f2f4f9);border-radius:3px 5px 0 0"></div>
<svg class="ic" style="left:798.50px;top:62.00px;" width="11" height="12" viewBox="0 0 11 12"><rect x="0.5" y="0.5" width="4" height="4" fill="#cfe3f6" stroke="#3a78b8"/><rect x="0.5" y="7" width="4" height="4" fill="#cfe3f6" stroke="#3a78b8"/><path d="M6 2 H10.5 M6 4 H9 M6 8.5 H10.5 M6 10.5 H9" stroke="#3a78b8"/></svg>
<div class="t" style="left:812.50px;top:62.50px;font-size:10px;color:#2a2a2a;transform:scaleX(0.8808);transform-origin:0 0;">Ou...</div>
<svg class="ic" style="left:837.50px;top:63.50px;" width="9" height="9" viewBox="0 0 9 9"><path d="M1 1 L8 8 M8 1 L1 8" stroke="#8a8a8a" stroke-width="2.2"/><path d="M1 1 L8 8 M8 1 L1 8" stroke="#f2f4f9" stroke-width="0.8"/></svg>
<svg class="ic" style="left:855.00px;top:62.00px;" width="11" height="11" viewBox="0 0 11 11"><circle cx="5.5" cy="5.5" r="4.8" fill="#eaf3ea" stroke="#9cc99c"/><circle cx="5.5" cy="5.5" r="2.2" fill="#a8d0a8"/></svg>
<div class="t" style="left:869.00px;top:62.50px;font-size:10px;color:#9a9a9a;transform:scaleX(0.8771);transform-origin:0 0;">Bu...</div>
<svg class="ic" style="left:894.50px;top:62.00px;" width="9" height="12" viewBox="0 0 9 12"><rect x="0.5" y="0.5" width="8" height="11" fill="#efefef" stroke="#c0c0c0"/><path d="M2 3 H7 M2 5 H7 M2 7 H7" stroke="#c7c7c7"/></svg>
<div class="t" style="left:908.00px;top:62.50px;font-size:10px;color:#9a9a9a;transform:scaleX(0.8706);transform-origin:0 0;">Ta...</div>
<div class="a" style="left:939.70px;top:64.00px;width:7.60px;height:3.00px;border:1px solid #777;border-radius:1px"></div>
<div class="a" style="left:956.50px;top:64.00px;width:8.30px;height:7.60px;border:1px solid #6e6e6e;border-top-width:2px;background:#fafafa"></div>
<div class="a" style="left:830.00px;top:79.00px;width:141.00px;height:16.50px;background:#f1f2f4"></div>
<svg class="ic" style="left:833.00px;top:82.50px;" width="10" height="10" viewBox="0 0 10 10"><circle cx="3.2" cy="6.5" r="2.8" fill="#b5b5b5"/><circle cx="6.5" cy="3.5" r="2.8" fill="#cfcfcf"/><circle cx="7" cy="7" r="2.3" fill="#d9d9d9"/></svg>
<svg class="ic" style="left:849.00px;top:81.50px;" width="11" height="11" viewBox="0 0 11 11"><rect x="0.5" y="0.5" width="8" height="9" fill="#dfe8f3" stroke="#9fb3cc"/><path d="M2.5 5 H7" stroke="#5a7aa0" stroke-width="1.2"/></svg>
<svg class="ic" style="left:866.00px;top:80.50px;" width="12" height="13" viewBox="0 0 12 13"><path d="M2 1 V11 M0.5 9 L2 11 L3.5 9" stroke="#444" fill="none"/><text x="5" y="5.5" font-size="6.5" font-family="Liberation Sans" fill="#7a3aa8" font-weight="bold">a</text><text x="5.5" y="12.5" font-size="6.5" font-family="Liberation Sans" fill="#7a3aa8" font-weight="bold">z</text></svg>
<svg class="ic" style="left:885.00px;top:81.50px;" width="11" height="11" viewBox="0 0 11 11"><circle cx="5.5" cy="5.5" r="4.5" fill="#cfe3f6" stroke="#3a78b8"/><path d="M0.5 0.5 L10.5 10.5" stroke="#2a5aa0" stroke-width="1.3"/></svg>
<svg class="ic" style="left:901.00px;top:80.50px;" width="12" height="12" viewBox="0 0 12 12"><circle cx="5" cy="7" r="2.5" fill="#7a8ca8"/><path d="M0.5 2.5 L9.5 11.5" stroke="#2a4a80" stroke-width="1.3"/><text x="7.5" y="5" font-size="5.5" font-family="Liberation Sans" fill="#c0305a" font-weight="bold">s</text></svg>
<svg class="ic" style="left:920.50px;top:83.50px;" width="7" height="7" viewBox="0 0 7 7"><circle cx="3.5" cy="3.5" r="3" fill="#3f9f56"/></svg>
<svg class="ic" style="left:935.50px;top:81.50px;" width="11" height="11" viewBox="0 0 11 11"><path d="M3 0.5 V10.5 M6.5 0.5 V10.5 M0.5 3.5 H10 M0.5 7 H10" stroke="#222" stroke-width="1.3"/></svg>
<svg class="ic" style="left:959.00px;top:83.00px;" width="8" height="5" viewBox="0 0 8 5"><path d="M0.5 0.5 H7.5 L4 4.5 Z" fill="none" stroke="#555"/></svg>
<div class="a" style="left:816.00px;top:150.20px;width:84.30px;height:12.80px;background:#d9d9d9"></div>
<svg class="ic" style="left:819.50px;top:97.50px;" width="9" height="9" viewBox="0 0 9 9"><path d="M0.5 0.5 H3 V5.5 H5.5 V0.5 H8.5 V8.5 H0.5 Z" fill="#3a78c0"/></svg>
<div class="t" style="left:838px;top:97.10px;font-size:10px;color:#1e1e1e;transform:scaleX(0.8900);transform-origin:0 0">main.h<span style="color:#b3a172"></span></div>
<svg class="ic" style="left:819.50px;top:111.00px;" width="9" height="9" viewBox="0 0 9 9"><path d="M0.5 0.5 H3 V5.5 H5.5 V0.5 H8.5 V8.5 H0.5 Z" fill="#3a78c0"/></svg>
<div class="t" style="left:838px;top:110.60px;font-size:10px;color:#1e1e1e;transform:scaleX(0.8877);transform-origin:0 0">stm32l0xx_hal.h<span style="color:#b3a172"></span></div>
<svg class="ic" style="left:819.00px;top:124.50px;" width="10" height="10" viewBox="0 0 10 10"><path d="M2 0 V10 M8 0 V10 M0 5 H10" stroke="#3f9f56" stroke-dasharray="1.5 1" stroke-width="1.1"/></svg>
<div class="t" style="left:838px;top:124.10px;font-size:10px;color:#1e1e1e;transform:scaleX(0.8856);transform-origin:0 0">SystemClock_Config(void)<span style="color:#b3a172"> : void</span></div>
<svg class="ic" style="left:819.00px;top:138.00px;" width="10" height="10" viewBox="0 0 10 10"><path d="M2 0 V10 M8 0 V10 M0 5 H10" stroke="#3f9f56" stroke-dasharray="1.5 1" stroke-width="1.1"/></svg>
<div class="t" style="left:830.2px;top:132.00px;font-size:7px;color:#c0305a">S</div>
<div class="t" style="left:838px;top:137.60px;font-size:10px;color:#1e1e1e;transform:scaleX(0.8854);transform-origin:0 0">MX_GPIO_Init(void)<span style="color:#b3a172"> : void</span></div>
<svg class="ic" style="left:821.00px;top:153.50px;" width="6" height="6" viewBox="0 0 6 6"><circle cx="3" cy="3" r="2.8" fill="#4a9e62"/></svg>
<div class="t" style="left:838px;top:151.10px;font-size:10px;color:#1e1e1e;transform:scaleX(0.8768);transform-origin:0 0">main(void) : int<span style="color:#b3a172"></span></div>
<svg class="ic" style="left:821.00px;top:167.00px;" width="6" height="6" viewBox="0 0 6 6"><circle cx="3" cy="3" r="2.8" fill="#4a9e62"/></svg>
<div class="t" style="left:838px;top:164.60px;font-size:10px;color:#1e1e1e;transform:scaleX(0.8856);transform-origin:0 0">SystemClock_Config(void)<span style="color:#b3a172"> : void</span></div>
<svg class="ic" style="left:821.00px;top:180.50px;" width="6" height="6" viewBox="0 0 6 6"><circle cx="3" cy="3" r="2.8" fill="#4a9e62"/></svg>
<div class="t" style="left:830.2px;top:172.50px;font-size:7px;color:#c0305a">S</div>
<div class="t" style="left:838px;top:178.10px;font-size:10px;color:#1e1e1e;transform:scaleX(0.8854);transform-origin:0 0">MX_GPIO_Init(void)<span style="color:#b3a172"> : void</span></div>
<svg class="ic" style="left:821.00px;top:194.00px;" width="6" height="6" viewBox="0 0 6 6"><circle cx="3" cy="3" r="2.8" fill="#4a9e62"/></svg>
<div class="t" style="left:838px;top:191.60px;font-size:10px;color:#1e1e1e;transform:scaleX(0.8799);transform-origin:0 0">_Error_Handler(char*, int)<span style="color:#b3a172"> : void</span></div>
<svg class="ic" style="left:821.00px;top:207.50px;" width="6" height="6" viewBox="0 0 6 6"><circle cx="3" cy="3" r="2.8" fill="#4a9e62"/></svg>
<svg class="ic" style="left:818.00px;top:205.50px;" width="10" height="10" viewBox="0 0 10 10"><path d="M0.5 9.5 L9.5 0.5" stroke="#555" stroke-width="1"/></svg>
<div class="t" style="left:838px;top:205.10px;font-size:10px;color:#9a9a9a;transform:scaleX(0.8775);transform-origin:0 0">assert_failed(uint8_t*, uint32_t) : vo<span style="color:#b3a172"></span></div>
<div class="a" style="left:974.70px;top:200.00px;width:2.50px;height:30.00px;background:#e9edf9"></div>
<div class="a" style="left:797.00px;top:414.00px;width:176.00px;height:11.50px;background:#f0f0f0"></div>
<div class="a" style="left:808.75px;top:414.50px;width:143.75px;height:10.50px;background:#cdcdcd"></div>
<svg class="ic" style="left:800.50px;top:416.50px;" width="5" height="7" viewBox="0 0 5 7"><path d="M4.2 0.8 L1.2 3.5 L4.2 6.2" fill="none" stroke="#555" stroke-width="1.3"/></svg>
<svg class="ic" style="left:964.30px;top:415.80px;" width="5" height="7" viewBox="0 0 5 7"><path d="M0.8 0.8 L3.8 3.5 L0.8 6.2" fill="none" stroke="#555" stroke-width="1.3"/></svg>
<div class="a" style="left:247.80px;top:431.30px;width:726.90px;height:122.30px;background:#fff;border-radius:4px;box-shadow:0 0 0 0.8px #d3daec"></div>
<div class="a" style="left:247.80px;top:431.30px;width:726.90px;height:18.70px;background:linear-gradient(#d9e3f1,#cfdcee);border-radius:3px 3px 0 0"></div>
<div class="a" style="left:352.50px;top:431.30px;width:68.70px;height:18.70px;background:#fff;border-radius:5px 5px 0 0"></div>
<svg class="ic" style="left:251.00px;top:435.00px;" width="11" height="12" viewBox="0 0 11 12"><rect x="0.5" y="0.5" width="10" height="11" fill="#f2f2f2" stroke="#9a9a9a"/><circle cx="5" cy="4" r="2.4" fill="#e03030"/><rect x="2" y="7.5" width="6" height="3" fill="#f0b030"/></svg>
<div class="t" style="left:266.00px;top:435.50px;font-size:10px;color:#2a2a2a;transform:scaleX(0.8932);transform-origin:0 0;">Problems</div>
<svg class="ic" style="left:311.00px;top:435.00px;" width="12" height="12" viewBox="0 0 12 12"><rect x="3.5" y="0.5" width="8" height="10" fill="#f4e9c9" stroke="#b9a46a"/><path d="M0.5 6 L3 9 L8 3" fill="none" stroke="#2a6ac0" stroke-width="1.4"/></svg>
<div class="t" style="left:326.00px;top:435.50px;font-size:10px;color:#2a2a2a;transform:scaleX(0.8913);transform-origin:0 0;">Tasks</div>
<svg class="ic" style="left:356.50px;top:435.00px;" width="10" height="11" viewBox="0 0 10 11"><rect x="0.5" y="0.5" width="9" height="9" rx="1.5" fill="#e6eef8" stroke="#3d6ea8" stroke-width="1.2"/><path d="M2.5 3.5 H6" stroke="#3d6ea8"/><path d="M2 10.5 H8" stroke="#3d6ea8"/></svg>
<div class="t" style="left:369.00px;top:435.50px;font-size:10px;color:#2a2a2a;transform:scaleX(0.8928);transform-origin:0 0;">Console</div>
<svg class="ic" style="left:408.00px;top:437.00px;" width="9" height="9" viewBox="0 0 9 9"><path d="M1 1 L8 8 M8 1 L1 8" stroke="#8a8a8a" stroke-width="2.2"/><path d="M1 1 L8 8 M8 1 L1 8" stroke="#fff" stroke-width="0.8"/></svg>
<svg class="ic" style="left:425.00px;top:436.00px;" width="11" height="10" viewBox="0 0 11 10"><rect x="0.5" y="0.5" width="10" height="9" fill="#f7f7f7" stroke="#6a7a90"/><path d="M0.5 3.5 H10.5 M4 3.5 V9.5" stroke="#8a98aa"/></svg>
<div class="t" style="left:439.00px;top:435.50px;font-size:10px;color:#2a2a2a;transform:scaleX(0.8842);transform-origin:0 0;">Properties</div>
<svg class="ic" style="left:715.00px;top:437.50px;" width="8" height="7.5" viewBox="0 0 8 7.5"><rect x="0.5" y="0.5" width="7" height="6.5" fill="#d9d9d9" stroke="#b0b0b0"/></svg>
<svg class="ic" style="left:731.00px;top:435.00px;" width="11" height="11" viewBox="0 0 11 11"><path d="M1.5 1.5 L9.5 9.5 M9.5 1.5 L1.5 9.5" stroke="#555" stroke-width="2.6"/><path d="M1.5 1.5 L9.5 9.5 M9.5 1.5 L1.5 9.5" stroke="#9a9a9a" stroke-width="1"/></svg>
<svg class="ic" style="left:747.50px;top:435.00px;" width="11" height="11" viewBox="0 0 11 11"><path d="M1.5 1.5 L9.5 9.5 M9.5 1.5 L1.5 9.5" stroke="#6a6a6a" stroke-width="2.4"/><path d="M1.5 1.5 L9.5 9.5 M9.5 1.5 L1.5 9.5" stroke="#aaa" stroke-width="1"/></svg>
<div class="a" style="left:763.50px;top:434.00px;width:1.00px;height:13.00px;background:#9aa3b2"></div>
<svg class="ic" style="left:771.00px;top:435.00px;" width="12" height="12" viewBox="0 0 12 12"><rect x="0.5" y="0.5" width="8" height="10" fill="#f3f5f8" stroke="#8a98aa"/><path d="M2 3 H6 M2 5 H6" stroke="#6a7a90"/><path d="M7 8 L11 11 M11 8 L7 11" stroke="#555" stroke-width="1.2"/></svg>
<svg class="ic" style="left:788.00px;top:435.00px;" width="12" height="12" viewBox="0 0 12 12"><rect x="3.5" y="0.5" width="8" height="10" fill="#f3f5f8" stroke="#8a98aa"/><path d="M0.5 11 L3 6 L5.5 11 Z" fill="#f0c030" stroke="#a07a20" stroke-width="0.6"/></svg>
<svg class="ic" style="left:805.00px;top:435.00px;" width="12" height="12" viewBox="0 0 12 12"><rect x="0.5" y="0.5" width="10" height="10" fill="#f5f2ea" stroke="#b8b0a0"/><path d="M2 4 H6 L8 2 M8 6 L5 9 H2" stroke="#d0a850" fill="none"/></svg>
<div class="a" style="left:820.00px;top:433.30px;width:17.50px;height:14.20px;background:#c3daf3;border:1px solid #9cc0ea"></div>
<div class="a" style="left:837.50px;top:433.30px;width:17.00px;height:14.20px;background:#c3daf3;border:1px solid #9cc0ea"></div>
<svg class="ic" style="left:823.00px;top:435.00px;" width="12" height="11" viewBox="0 0 12 11"><rect x="3.5" y="0.5" width="8" height="7" fill="#fff" stroke="#5a7aa0"/><path d="M1 5 Q0 10 5 9" fill="none" stroke="#5a7aa0" stroke-width="1.2"/></svg>
<svg class="ic" style="left:840.00px;top:435.00px;" width="12" height="11" viewBox="0 0 12 11"><rect x="3.5" y="0.5" width="8" height="7" fill="#fff" stroke="#5a7aa0"/><rect x="6" y="2" width="3" height="3" fill="#e03030"/><path d="M1 5 Q0 10 5 9" fill="none" stroke="#5a7aa0" stroke-width="1.2"/></svg>
<div class="a" style="left:856.00px;top:434.00px;width:1.00px;height:13.00px;background:#9aa3b2"></div>
<svg class="ic" style="left:863.50px;top:435.00px;" width="12" height="11" viewBox="0 0 12 11"><rect x="0.5" y="4.5" width="10" height="6" fill="#f4f7fb" stroke="#3d6ea8"/><rect x="0.5" y="4.5" width="10" height="2" fill="#3d6ea8"/><path d="M6 6 L10.5 1" stroke="#2a9a3a" stroke-width="2"/></svg>
<svg class="ic" style="left:881.00px;top:435.00px;" width="12" height="12" viewBox="0 0 12 12"><rect x="0.5" y="0.5" width="11" height="8" fill="#dfe8f3" stroke="#3d6ea8" stroke-width="1.2"/><path d="M3 11 H9 M6 8.5 V11" stroke="#3d6ea8"/></svg>
<div class="dd" style="left:897.50px;top:440px;border-top-color:#111"></div>
<svg class="ic" style="left:909.50px;top:434.50px;" width="12" height="12" viewBox="0 0 12 12"><rect x="0.5" y="2.5" width="10" height="9" fill="#fdf6d8" stroke="#8f9ab0"/><rect x="0.5" y="2.5" width="10" height="2" fill="#5b8fd6"/><circle cx="9.5" cy="2.5" r="2.2" fill="#f2c33c"/></svg>
<div class="dd" style="left:925.75px;top:440px;border-top-color:#111"></div>
<div class="a" style="left:938.70px;top:437.00px;width:8.00px;height:3.00px;border:1px solid #888;border-radius:1px;background:#eef2f8"></div>
<div class="a" style="left:956.30px;top:437.30px;width:8.20px;height:7.40px;border:1px solid #6e6e6e;border-top-width:2px;background:#fafafa"></div>
<div class="t" style="left:250.80px;top:451.60px;font-size:10px;color:#222;transform:scaleX(0.9049);transform-origin:0 0;">&lt;terminated&gt; New_configuration (1) [Ac6 STM32 Debugging] openocd</div>
<div class="a" style="left:250.00px;top:463.20px;width:723.00px;height:1.00px;background:#808080"></div>
<div class="a" style="left:251.75px;top:464.60px;width:91.30px;height:11.55px;background:#0a73d6"></div>
<div class="a" style="left:251.75px;top:475.85px;width:118.30px;height:11.55px;background:#0a73d6"></div>
<div class="a" style="left:251.75px;top:487.10px;width:223.80px;height:11.55px;background:#0a73d6"></div>
<div class="a" style="left:251.75px;top:498.35px;width:116.30px;height:11.55px;background:#0a73d6"></div>
<div class="a" style="left:251.75px;top:509.60px;width:125.80px;height:11.55px;background:#0a73d6"></div>
<div class="a m" style="left:251.3px;top:466.30px;font-size:9.4px;line-height:11.25px;white-space:pre;color:#e8f1fc;transform:scaleX(0.9325);transform-origin:0 0"><div style="height:11.25px">** Verified OK **</div><div style="height:11.25px">** Resetting Target **</div><div style="height:11.25px">Info : Stlink adapter speed set to 240 kHz</div><div style="height:11.25px">adapter speed: 240 kHz</div><div style="height:11.25px">shutdown command invoked</div></div>
<div class="a" style="left:272.80px;top:491.00px;width:0.90px;height:10.00px;background:#6a6a6a"></div>
<div class="a" style="left:960.50px;top:464.00px;width:12.00px;height:75.50px;background:#f0f0f0"></div>
<div class="a" style="left:960.50px;top:513.30px;width:12.00px;height:13.20px;background:#cdcdcd"></div>
<svg class="ic" style="left:963.50px;top:469.50px;" width="7" height="5" viewBox="0 0 7 5"><path d="M0.8 4.2 L3.5 1.2 L6.2 4.2" fill="none" stroke="#555" stroke-width="1.4"/></svg>
<svg class="ic" style="left:963.50px;top:530.50px;" width="7" height="5" viewBox="0 0 7 5"><path d="M0.8 0.8 L3.5 3.8 L6.2 0.8" fill="none" stroke="#555" stroke-width="1.4"/></svg>
<div class="a" style="left:250.00px;top:539.60px;width:722.50px;height:11.20px;background:#f0f0f0"></div>
<svg class="ic" style="left:253.50px;top:542.00px;" width="5" height="7" viewBox="0 0 5 7"><path d="M4.2 0.8 L1.2 3.5 L4.2 6.2" fill="none" stroke="#aaa" stroke-width="1.1"/></svg>
<svg class="ic" style="left:952.00px;top:542.00px;" width="5" height="7" viewBox="0 0 5 7"><path d="M0.8 0.8 L3.8 3.5 L0.8 6.2" fill="none" stroke="#aaa" stroke-width="1.1"/></svg>
<div class="a" style="left:764.00px;top:559.50px;width:1.00px;height:12.50px;background:repeating-linear-gradient(#8a8f99 0 1px,transparent 1px 3px)"></div>
</div></body></html>
